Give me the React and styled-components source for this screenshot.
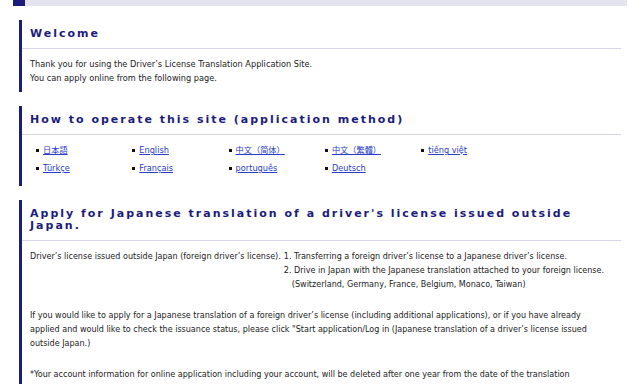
import styled, { createGlobalStyle } from "styled-components";

const navy = '#1c1c7c';
const lavender = '#e4e4f0';
const rule = '#d6d6ea';
const textColor = '#222222';
const linkColor = '#2a3cc8';

const GlobalStyle = createGlobalStyle`
  html, body {
    margin: 0;
    padding: 0;
    background: #fff;
  }
  body {
    font-family: "DejaVu Sans", "Noto Sans CJK JP", sans-serif;
    color: ${textColor};
  }
`

const Page = styled.div`
  width: 614px;
  margin: 0 13px;
  height: 384px;
  overflow: hidden;
`

const TopBar = styled.div`
  height: 6px;
  background: ${lavender};
  display: flex;
`

const TopMark = styled.div`
  width: 12px;
  background: ${navy};
`

const Section = styled.section`
  margin: 14px 6px 0;
  border-left: 3px solid ${navy};
  padding-bottom: ${({pad}) => pad || '7px'};
`

const Heading = styled.h2`
  margin: 0;
  padding: 8px 8px;
  font-family: "DejaVu Sans", sans-serif;
  font-weight: bold;
  font-size: 11px;
  line-height: 12px;
  letter-spacing: 2px;
  color: ${navy};
  border-bottom: 1px solid ${rule};
`

const Body = styled.div`
  padding: 8px 8px 0;
  font-size: 8.2px;
  line-height: 14px;
`

const P = styled.p`
  margin: 0;
`

const LangGrid = styled.ul`
  margin: 0;
  padding: 0 0 0 6px;
  list-style: none;
  display: grid;
  grid-template-columns: repeat(5, 96.3px);
  row-gap: 4px;
`

const LangItem = styled.li`
  display: flex;
  align-items: center;
  gap: 4px;
  font-size: 8.2px;
  line-height: 14px;
  &::before {
    content: "";
    width: 3px;
    height: 3px;
    background: #111;
  }
`

const LangLink = styled.a`
  color: ${linkColor};
  text-decoration: underline;
  font-family: "DejaVu Sans", "Noto Sans CJK JP", sans-serif;
`

const Narrow = styled.div`
  padding: 8px 8px 0;
  font-family: "DejaVu Sans Condensed", "DejaVu Sans", sans-serif;
  font-size: 8.95px;
  line-height: 14px;
`

const Table = styled.div`
  display: grid;
  grid-template-columns: auto 1fr;
  column-gap: 3px;
  margin-bottom: 17px;
`

const Steps = styled.ol`
  margin: 0;
  padding: 0;
  list-style: none;
`

const Note = styled.div`
  padding-left: ${({indent}) => indent || 0};
`

const Para = styled.p`
  margin: 0 0 17px;
`

const langs = [
  '日本語', 'English', '中文（简体）', '中文（繁體）', 'tiếng việt',
  'Türkçe', 'Français', 'português', 'Deutsch',
];

export default function App() {
  return (
    <>
      <GlobalStyle />
      <Page>
        <TopBar><TopMark /></TopBar>

        <Section>
          <Heading>Welcome</Heading>
          <Body>
            <P>Thank you for using the Driver’s License Translation Application Site.</P>
            <P>You can apply online from the following page.</P>
          </Body>
        </Section>

        <Section pad="11px">
          <Heading>How to operate this site (application method)</Heading>
          <Body>
            <LangGrid>
              {langs.map(l => (
                <LangItem key={l}><LangLink href="#">{l}</LangLink></LangItem>
              ))}
            </LangGrid>
          </Body>
        </Section>

        <Section>
          <Heading>Apply for Japanese translation of a driver's license issued outside Japan.</Heading>
          <Narrow>
            <Table>
              <div>Driver’s license issued outside Japan (foreign driver’s license).</div>
              <Steps>
                <li>1. Transferring a foreign driver’s license to a Japanese driver’s license.</li>
                <li>2. Drive in Japan with the Japanese translation attached to your foreign license.</li>
                <li><Note indent="8px">(Switzerland, Germany, France, Belgium, Monaco, Taiwan)</Note></li>
              </Steps>
            </Table>
            <Para>
              If you would like to apply for a Japanese translation of a foreign driver’s license (including additional applications), or if you have already applied and would like to check the issuance status, please click "Start application/Log in (Japanese translation of a driver’s license issued outside Japan.)
            </Para>
            <Para>
              *Your account information for online application including your account, will be deleted after one year from the date of the translation application.
            </Para>
          </Narrow>
        </Section>
      </Page>
    </>
  );
}
